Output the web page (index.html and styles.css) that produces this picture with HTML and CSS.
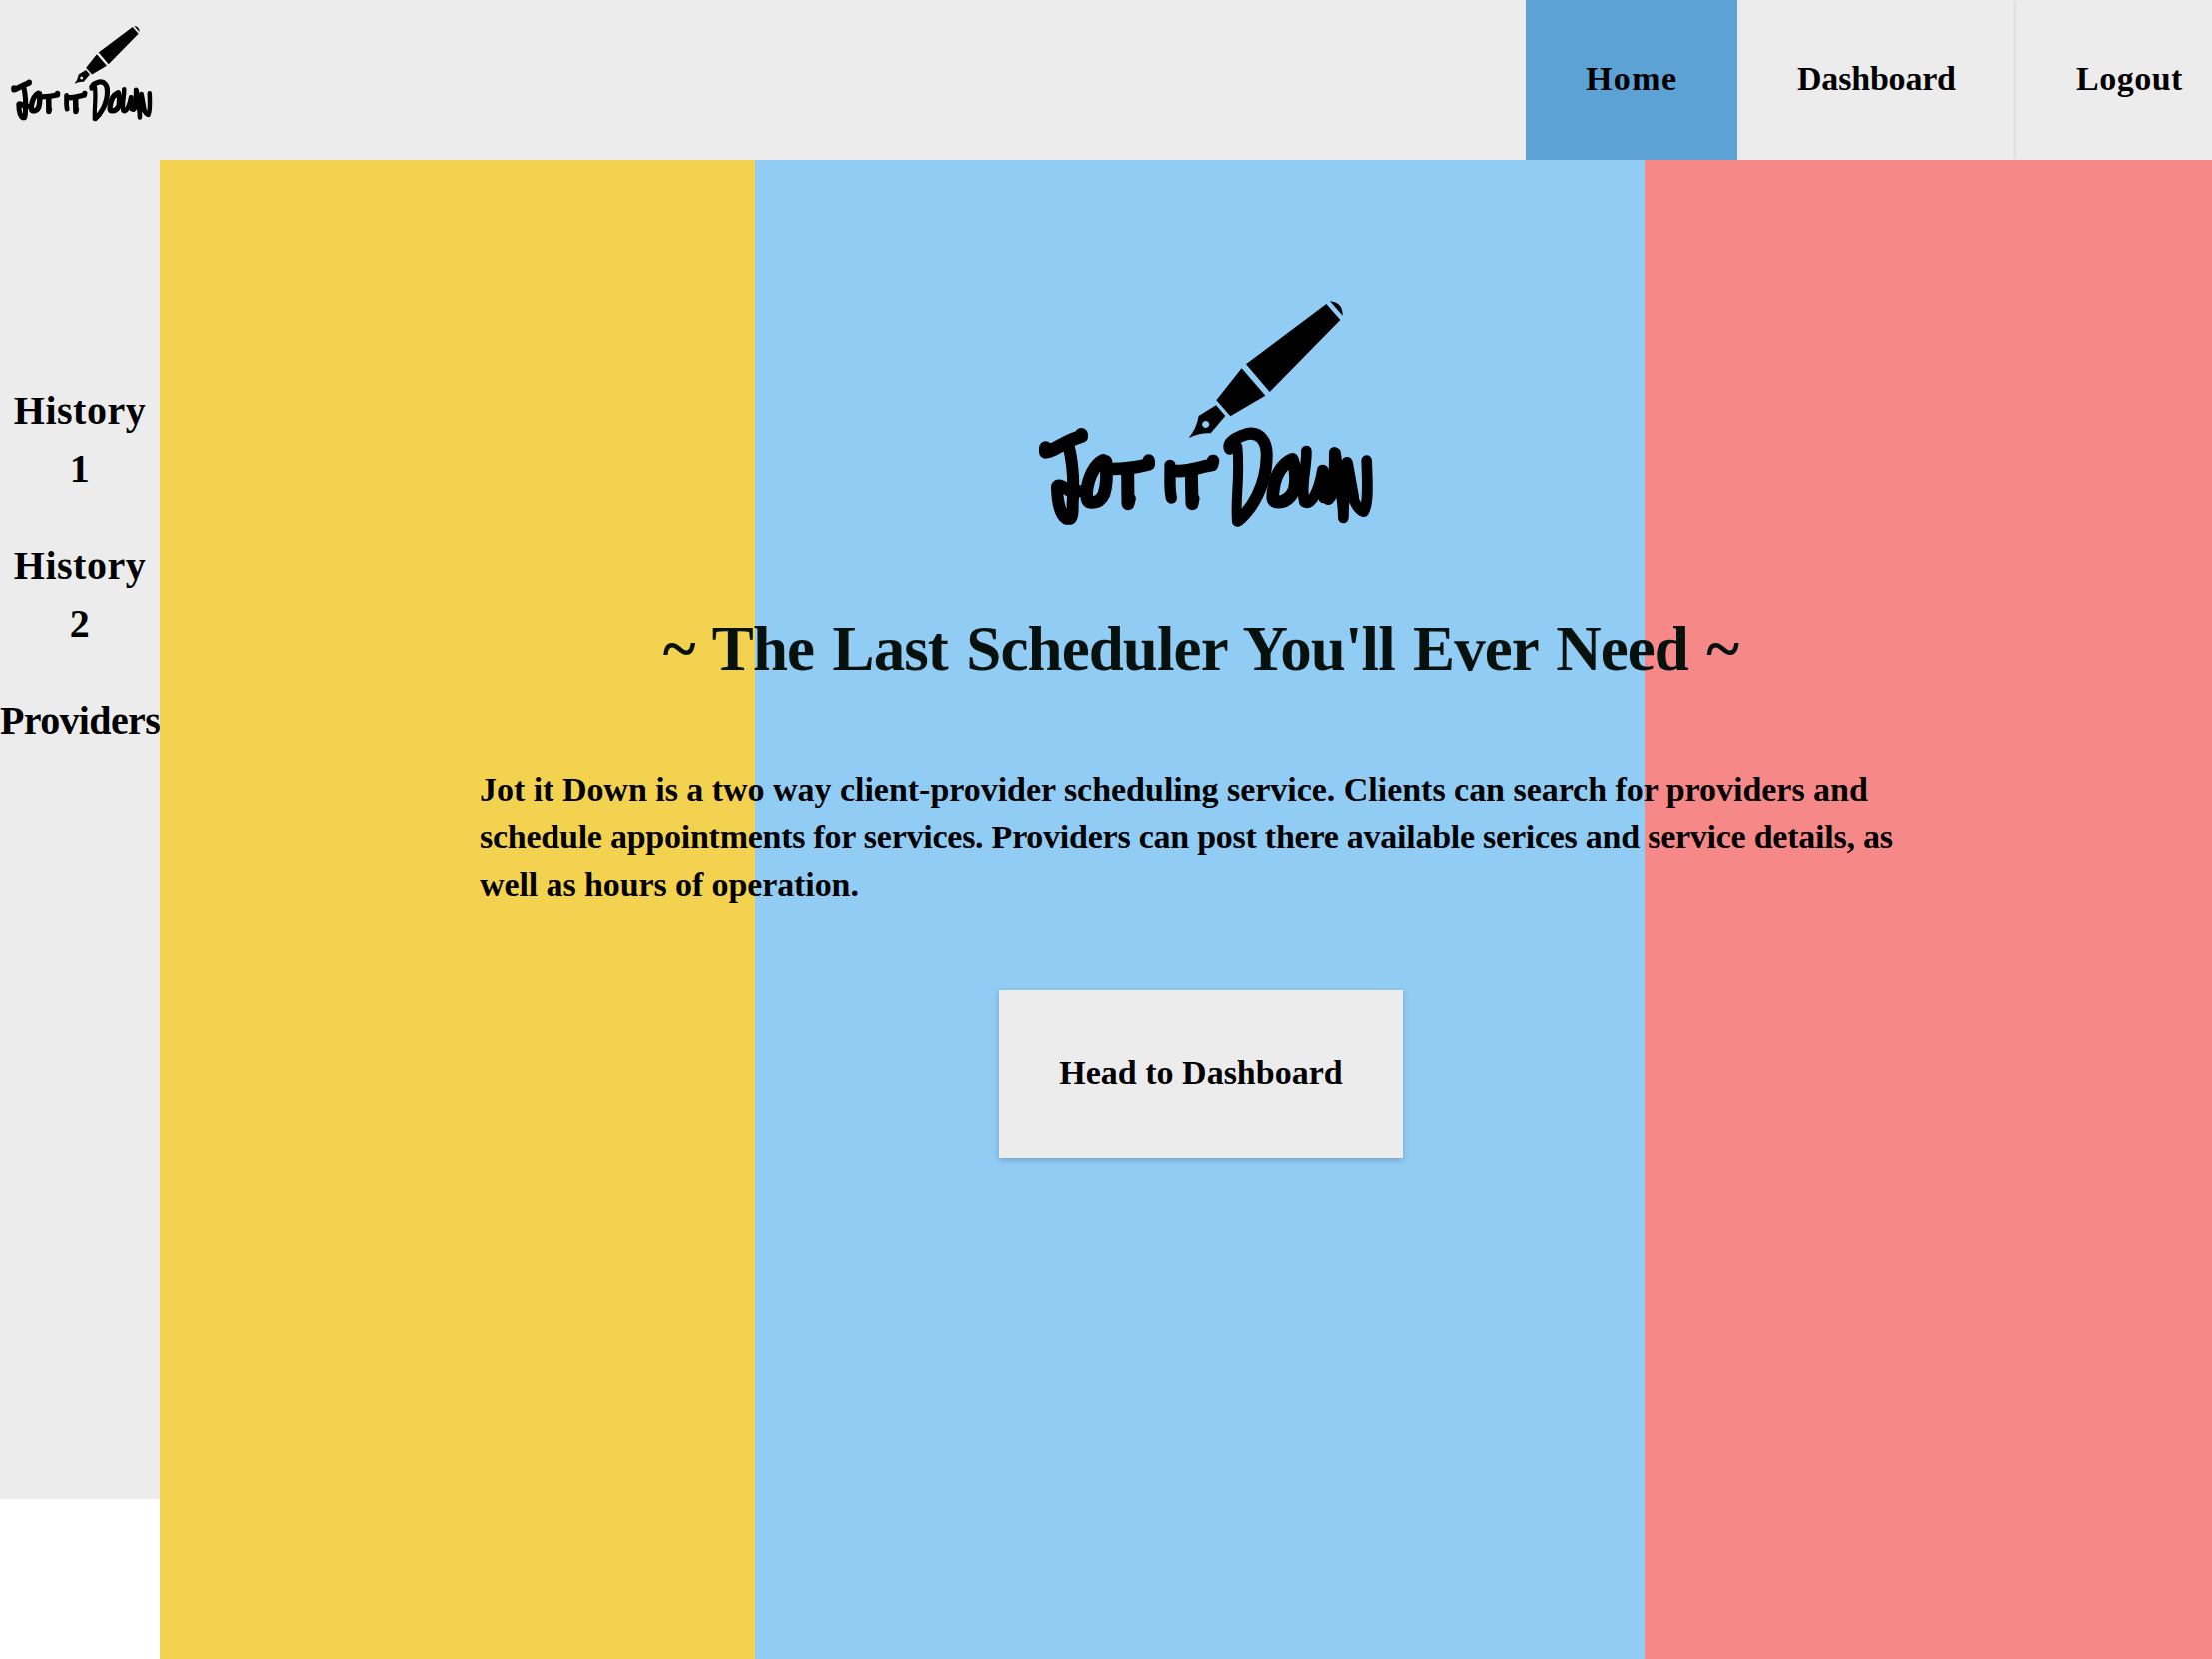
FILE: index.html
```html
<!DOCTYPE html>
<html lang="en">
<head>
<meta charset="utf-8">
<title>Jot it Down</title>
<link rel="stylesheet" href="styles.css">
</head>
<body>
<svg class="defs" aria-hidden="true">
  <symbol id="logo" viewBox="0 0 1050 750">
    <path d="M903 34Q942 38 941 77ZM892 42L934 90L722 306L651 223ZM638 235L709 317L604 379L562 331ZM561 346L589 378L545 430Q511 428 479 444Q502 418 509 378ZM530 393a10.500 10.500 0 1 0 .1 0Z" fill-rule="evenodd"/>
    <g fill="none" stroke="#000" stroke-linecap="round" stroke-linejoin="round" stroke-width="39">
      <path stroke-width="40" d="M50 474V486C80 482 105 453 157 439V434"/>
      <path stroke-width="36" d="M119 468C129 510 137 560 131 640C131 670 130 682 124 686H112C98 678 85 646 84 590C90 582 108 592 122 603L160 604"/>
      <path stroke-width="38" d="M223 511C198 522 177 562 173 606C172 628 176 637 185 637C206 639 217 629 225 612C234 584 234 550 231 515"/>
      <path stroke-width="38" d="M246 537C285 537 325 532 359 523V512"/>
      <path d="M296 548L297 641L301 626"/>
      <path stroke-width="34" d="M423 526C424 560 420 594 427 624"/>
      <path stroke-width="38" d="M442 543C478 546 513 530 549 525L552 513"/>
      <path d="M487 550L489 641L492 626"/>
      <path stroke-width="36" d="M602 476C596 455 622 442 655 432C691 425 715 454 713 500C712 590 666 660 627 692"/>
      <path stroke-width="30" d="M624 694C618 620 634 565 625 470"/>
      <path stroke-width="38" d="M790 508C760 521 738 555 733 601C729 627 731 634 742 636C765 638 784 626 796 599C802 568 800 535 790 508Z"/>
      <path stroke-width="32" d="M832 483C834 535 814 586 826 636C848 652 872 593 880 540C880 575 873 620 898 629C917 622 915 560 916 487C919 550 943 600 943 684C944 630 950 560 954 517C957 575 971 654 1004 665C1020 641 1015 570 1013 512"/>
      <path stroke-width="32" d="M884 542V624M920 490L934 600M956 520L974 620"/>
    </g>
  </symbol>
</svg>
<header class="header">
  <svg class="header-logo" role="img" aria-label="Jot it Down"><use href="#logo"/></svg>
  <nav class="nav">
    <a class="nav-link home active">Home</a>
    <a class="nav-link dashboard">Dashboard</a>
    <a class="nav-link logout">Logout</a>
  </nav>
</header>
<div class="layout">
  <aside class="sidebar">
    <a class="side-link">History<br>1</a>
    <a class="side-link">History<br>2</a>
    <a class="side-link providers">Providers</a>
  </aside>
  <main class="main">
    <svg class="hero-logo" role="img" aria-label="Jot it Down"><use href="#logo"/></svg>
    <h1 class="title">~ The Last Scheduler You'll Ever Need ~</h1>
    <p class="about">
      <span class="line first">Jot it Down is a two way client-provider scheduling service. Clients can search for providers and</span>
      <span class="line second">schedule appointments for services. Providers can post there available serices and service details, as</span>
      <span class="line third">well as hours of operation.</span>
    </p>
    <a class="button">Head to Dashboard</a>
  </main>
</div>
</body>
</html>
```
FILE: styles.css
```css
* { box-sizing: border-box; }
body {
  margin: 0;
  height: 1660px;
  overflow: hidden;
  display: flex;
  flex-direction: column;
  background: #fff;
  color: #000;
  font-family: "Liberation Serif", serif;
  font-size: 34px;
  font-weight: 700;
  line-height: 48px;
}
.defs { display: none; }
.header {
  display: flex;
  flex: 0 0 160px;
  justify-content: space-between;
  background: #ececec;
}
.header-logo {
  width: 148px;
  height: 106px;
  margin: 21px 0 0 7px;
}
.nav { display: flex; }
.nav-link {
  display: block;
  padding: 55px 0 0 60px;
}
.home { width: 212px; letter-spacing: 1.400px; }
.dashboard { width: 279px; letter-spacing: -.2px; }
.logout {
  width: 196px;
  letter-spacing: .5px;
  box-shadow: 0 0 4px rgba(0, 0, 0, .15);
}
.active { background: #5da2d5; }
.layout { display: flex; flex: 1; }
.sidebar {
  display: flex;
  flex-direction: column;
  gap: 39px;
  width: 160px;
  height: 1340px;
  padding-top: 222px;
  overflow: hidden;
  background: #ececec;
  text-align: center;
  font-size: 40px;
  line-height: 58px;
  letter-spacing: .5px;
}
.providers { letter-spacing: -.65px; }
.main {
  display: flex;
  flex: 1;
  flex-direction: column;
  align-items: center;
  padding: 130px 0 0 30px;
  background: linear-gradient(90deg, #f3d250 596.500px, #90ccf4 596.500px, #90ccf4 1485.700px, #f78888 1485.700px);
}
.hero-logo { width: 350px; height: 250px; margin-left: 6px; }
.title {
  margin: 69px 0 0;
  color: #07120f;
  font-size: 63px;
  line-height: 80px;
  letter-spacing: -.9px;
  word-spacing: 3.500px;
  white-space: nowrap;
}
.about { width: 1444px; margin: 77px 0 0; }
.line { display: block; white-space: nowrap; }
.first { letter-spacing: -.03px; }
.second { letter-spacing: -.25px; }
.third { letter-spacing: -.1px; }
.button {
  width: 404px;
  height: 168px;
  margin-top: 81px;
  padding-top: 59px;
  background: #ececec;
  box-shadow: 0 2px 6px rgba(0, 0, 0, .2);
  text-align: center;
}
```
